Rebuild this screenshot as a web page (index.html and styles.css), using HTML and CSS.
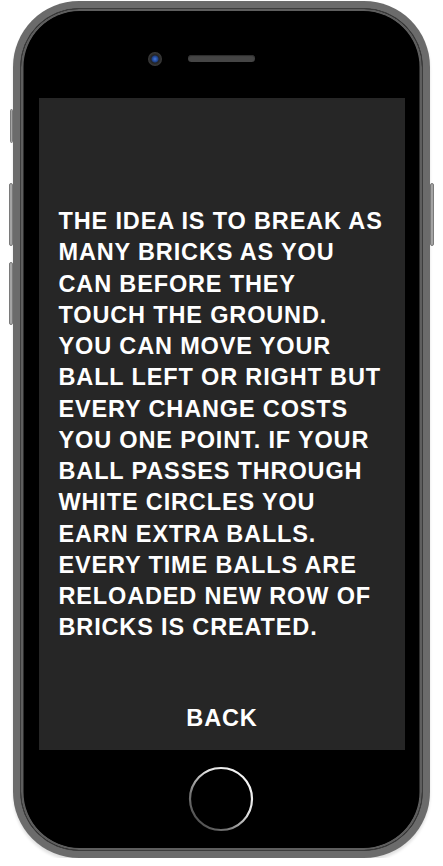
FILE: index.html
```html
<!DOCTYPE html>
<html>
<head>
<meta charset="utf-8">
<link rel="stylesheet" href="styles.css">
</head>
<body>
<div class="phone">
  <span class="btn btn-mute"></span>
  <span class="btn btn-vol-up"></span>
  <span class="btn btn-vol-down"></span>
  <span class="btn btn-power"></span>
  <div class="band">
    <div class="face">
      <div class="top-bezel">
        <span class="camera"></span>
        <span class="speaker"></span>
      </div>
      <div class="screen">
        <p class="rules">THE IDEA IS TO BREAK AS<br>MANY BRICKS AS YOU<br>CAN BEFORE THEY<br>TOUCH THE GROUND.<br>YOU CAN MOVE YOUR<br>BALL LEFT OR RIGHT BUT<br>EVERY CHANGE COSTS<br>YOU ONE POINT. IF YOUR<br>BALL PASSES THROUGH<br>WHITE CIRCLES YOU<br>EARN EXTRA BALLS.<br>EVERY TIME BALLS ARE<br>RELOADED NEW ROW OF<br>BRICKS IS CREATED.</p>
        <div class="back">BACK</div>
      </div>
      <div class="bottom-bezel">
        <svg class="home" width="66" height="66" viewBox="0 0 66 66">
          <defs>
            <linearGradient id="hg" x1="1" y1="0" x2="0" y2="1">
              <stop offset="0" stop-color="#ffffff"/>
              <stop offset="0.4" stop-color="#e0e0e0"/>
              <stop offset="0.7" stop-color="#777777"/>
              <stop offset="1" stop-color="#333333"/>
            </linearGradient>
          </defs>
          <circle cx="33" cy="33" r="31" fill="none" stroke="url(#hg)" stroke-width="2.2"/>
        </svg>
      </div>
    </div>
  </div>
</div>
</body>
</html>
```

FILE: styles.css
```css
html, body {
  margin: 0;
  padding: 0;
  background: #ffffff;
}

.phone {
  position: relative;
  width: 417px;
  height: 857px;
  margin: 1px 0 0 13px;
  box-sizing: border-box;
  padding: 7px;
  border-radius: 66px;
  background: #6b6b6b;
  box-shadow: 0 3px 3px rgba(0, 0, 0, 0.12);
}

.band {
  height: 100%;
  box-sizing: border-box;
  border-radius: 59px;
  border: 1.5px solid #3c3c3c;
  background: #000;
  box-shadow: inset 0 0 0 2.5px #5e5e5e;
  padding: 2px 3px;
}

.face {
  height: 100%;
  border-radius: 56px;
  background: #000;
  display: flex;
  flex-direction: column;
  padding: 0 14.5px;
  box-sizing: border-box;
}

.top-bezel {
  height: 87px;
  display: flex;
  align-items: center;
  justify-content: center;
  padding-top: 8px;
  padding-right: 40px;
  box-sizing: border-box;
  gap: 26px;
}

.camera {
  width: 14px;
  height: 14px;
  border-radius: 50%;
  background: radial-gradient(circle at 50% 50%, #4277dc 0, #1d3f86 3px, #222 4px, #3d3d3d 7px);
}

.speaker {
  width: 67px;
  height: 7px;
  border-radius: 4px;
  background: #454545;
  box-shadow: inset 0 1px 1px #2c2c2c;
}

.screen {
  height: 652px;
  background: #262626;
  display: flex;
  flex-direction: column;
  padding: 108px 20px 16px 20px;
  box-sizing: border-box;
  font-family: "Liberation Sans", Arial, sans-serif;
  font-weight: 700;
  color: #ffffff;
  font-size: 23.5px;
  line-height: 31.25px;
  letter-spacing: 0.85px;
}

.rules {
  margin: 0;
  white-space: nowrap;
}

.back {
  margin-top: auto;
  text-align: center;
  padding-left: 1px;
}

.bottom-bezel {
  flex: 1;
  display: flex;
  justify-content: center;
  padding-top: 16px;
  box-sizing: border-box;
}

.home {
  display: block;
  margin-left: -2px;
}

.btn {
  position: absolute;
  width: 4px;
  border-radius: 2px;
  background: #a4a4a4;
  border: 1px solid #7a7a7a;
  box-sizing: border-box;
}

.btn-mute {
  left: -3px;
  top: 108px;
  height: 34px;
  width: 3px;
}

.btn-vol-up {
  left: -4px;
  top: 182px;
  height: 63px;
}

.btn-vol-down {
  left: -4px;
  top: 261px;
  height: 63px;
}

.btn-power {
  right: -4px;
  top: 182px;
  height: 63px;
}
```
